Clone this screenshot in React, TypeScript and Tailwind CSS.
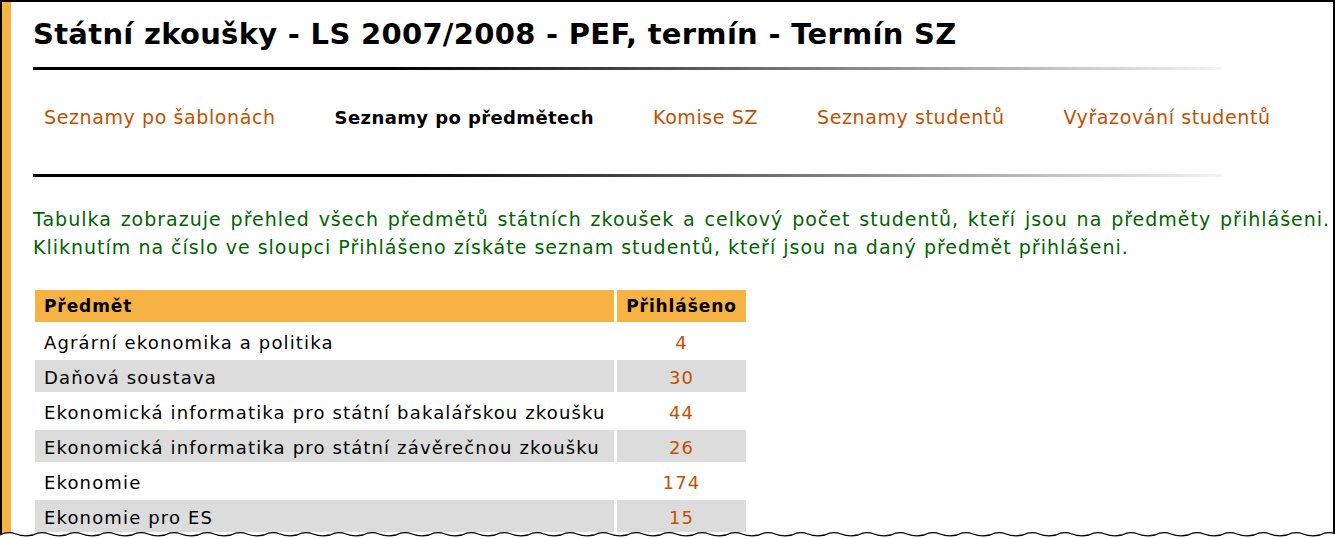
const navItems = [
  { label: "Seznamy po šablonách", active: false },
  { label: "Seznamy po předmětech", active: true },
  { label: "Komise SZ", active: false },
  { label: "Seznamy studentů", active: false },
  { label: "Vyřazování studentů", active: false },
];

const rows = [
  { name: "Agrární ekonomika a politika", count: 4 },
  { name: "Daňová soustava", count: 30 },
  { name: "Ekonomická informatika pro státní bakalářskou zkoušku", count: 44 },
  { name: "Ekonomická informatika pro státní závěrečnou zkoušku", count: 26 },
  { name: "Ekonomie", count: 174 },
  { name: "Ekonomie pro ES", count: 15 },
];

function Rule() {
  return <div className="h-[3px] w-[1189px] bg-[linear-gradient(to_right,#000_30%,#f4f4f4_100%)]" />;
}

function TornEdge() {
  let d = "M0 535";
  for (let x = 0; x < 1340; x += 33) {
    d += ` Q${x + 8} 531 ${x + 16} 534 Q${x + 24} 537 ${x + 33} 535`;
  }
  return (
    <svg className="absolute left-0 top-0" width="1335" height="539" viewBox="0 0 1335 539">
      <path d={d + " L1335 539 L0 539 Z"} fill="#fff" />
      <path d={d} fill="none" stroke="#000" strokeWidth="1.3" />
    </svg>
  );
}

export default function App() {
  return (
    <div className="relative h-[539px] w-[1335px] overflow-hidden bg-white font-['DejaVu_Sans',Verdana,sans-serif]">
      <div className="flex h-full border-t-2 border-r-2 border-black">
        <div className="w-[2px] bg-black" />
        <div className="w-[9px] bg-[#f6b243]" />
        <div className="min-w-0 flex-1 overflow-hidden pl-[22px]">
          <h1 className="whitespace-nowrap pt-[16px] text-[29px] font-bold leading-[32px] tracking-[0.3px] text-black">
            Státní zkoušky - LS 2007/2008 - PEF, termín - Termín SZ
          </h1>
          <div className="mt-[17px]">
            <Rule />
          </div>
          <nav className="flex h-[104px] items-center gap-[59px] pb-[10px] pl-[11px]">
            {navItems.map((item) => (
              <span
                key={item.label}
                className={
                  item.active
                    ? "whitespace-nowrap text-[18px] font-bold tracking-[0.4px] text-black"
                    : "whitespace-nowrap text-[19px] tracking-[0.6px] text-[#c25100]"
                }
              >
                {item.label}
              </span>
            ))}
          </nav>
          <Rule />
          <p className="mt-[28px] whitespace-nowrap text-[19px] leading-[28px] tracking-[1px] text-[#006400]">
            <span className="[word-spacing:1.8px]">
              Tabulka zobrazuje přehled všech předmětů státních zkoušek a celkový počet studentů, kteří jsou na předměty přihlášeni.
            </span>
            <br />
            Kliknutím na číslo ve sloupci Přihlášeno získáte seznam studentů, kteří jsou na daný předmět přihlášeni.
          </p>
          <table className="mt-[26px] -ml-[1px] border-separate border-spacing-[3px] text-[18px] tracking-[1.15px]">
            <thead>
              <tr>
                <th className="h-[32px] w-[579px] bg-[#f6b243] pl-[9px] pt-[2px] text-left text-[17px] font-bold tracking-[0.9px] text-black">Předmět</th>
                <th className="h-[32px] w-[129px] bg-[#f6b243] pt-[2px] text-center text-[17px] font-bold tracking-[0.9px] text-black">Přihlášeno</th>
              </tr>
            </thead>
            <tbody>
              {rows.map((r, i) => (
                <tr key={r.name}>
                  <td className={`h-[32px] whitespace-nowrap pl-[9px] pt-[3px] text-black ${i % 2 ? "bg-[#dcdcdc]" : "bg-white"}`}>{r.name}</td>
                  <td className={`h-[32px] pt-[3px] text-center text-[#c25100] ${i % 2 ? "bg-[#dcdcdc]" : "bg-white"}`}>{r.count}</td>
                </tr>
              ))}
            </tbody>
          </table>
        </div>
      </div>
      <TornEdge />
    </div>
  );
}
